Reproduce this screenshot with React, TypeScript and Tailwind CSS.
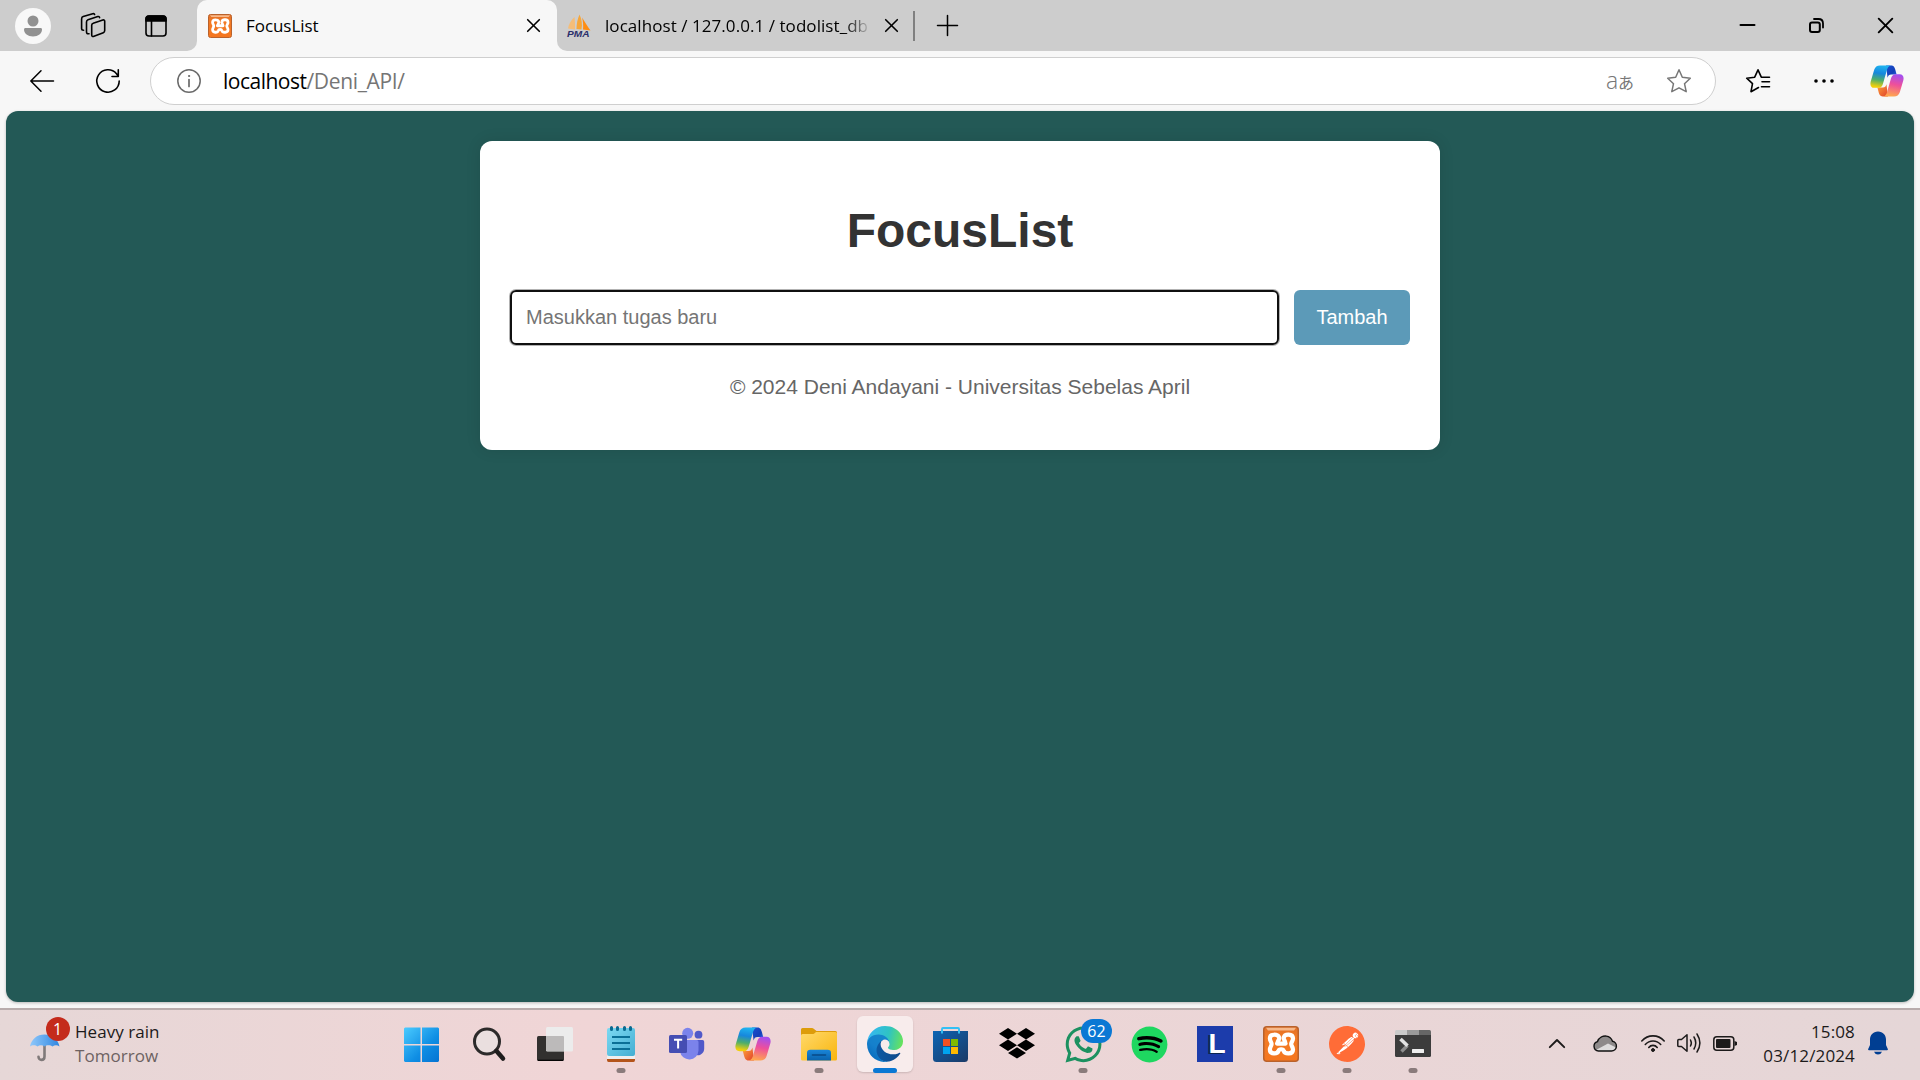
import React from "react";
import { FaWhatsapp, FaSpotify } from "react-icons/fa";
import { SiPostman } from "react-icons/si";

const ui = "font-['Open_Sans','Noto_Sans',sans-serif]";

type IconProps = {
  box: string;
  className: string;
  children: React.ReactNode;
  width?: number;
};

function Line({ box, className, children, width = 1.5 }: IconProps) {
  return (
    <svg
      viewBox={box}
      className={`shrink-0 overflow-visible ${className}`}
      fill="none"
      stroke="currentColor"
      strokeWidth={width}
      strokeLinecap="round"
      strokeLinejoin="round"
    >
      {children}
    </svg>
  );
}

function Xampp({ className }: { className: string }) {
  return (
    <svg viewBox="0 0 36 36" className={`shrink-0 ${className}`}>
      <defs>
        <linearGradient id="xa" x1="0" y1="0" x2="0" y2="1">
          <stop offset="0" stopColor="#e0702a" />
          <stop offset="0.3" stopColor="#f27a24" />
          <stop offset="1" stopColor="#f5761f" />
        </linearGradient>
      </defs>
      <rect x="0.75" y="0.75" width="34.5" height="34.5" rx="3" fill="url(#xa)" stroke="#b9622c" strokeWidth="1.5" />
      <path d="M3 1.8H33L31 4.4H5Z" fill="#f7b98a" />
      <path
        d="M16 11.2C14.5 8 7 7.4 6.9 12.4C6.8 15 8.6 16 8.6 18C8.6 20 6.8 21 6.9 23.6C7 28.6 14.5 28.4 15.6 24.6C16 22.8 20.2 22.8 20.6 24.6C21.7 28.4 29.9 28.6 30 23.6C30.1 21 28.2 20 28.2 18C28.2 16 30.1 15 30 12.4C29.9 7.4 21.7 7.6 20.8 11.4C20.2 13.6 22.2 14.6 22.2 16.6M16 11.2C17 13.6 14.6 14.6 14.6 16.6M14 17.6H22.6"
        fill="none"
        stroke="#fff"
        strokeWidth="4.2"
        strokeLinecap="round"
        strokeLinejoin="round"
      />
    </svg>
  );
}

function Copilot({ className, id }: { className: string; id: string }) {
  return (
    <svg viewBox="0 0 36 34" className={`shrink-0 ${className}`}>
      <defs>
        <linearGradient id={`${id}a`} x1="0.5" y1="0" x2="0.35" y2="1">
          <stop offset="0" stopColor="#1fb4f0" />
          <stop offset="0.35" stopColor="#1787dc" />
          <stop offset="0.65" stopColor="#4fae6a" />
          <stop offset="0.95" stopColor="#f0cf0c" />
        </linearGradient>
        <linearGradient id={`${id}b`} x1="0.6" y1="0" x2="0.4" y2="1">
          <stop offset="0" stopColor="#a34ff0" />
          <stop offset="0.45" stopColor="#ee4f9b" />
          <stop offset="1" stopColor="#ffa94d" />
        </linearGradient>
        <linearGradient id={`${id}c`} x1="0" y1="0" x2="1" y2="1">
          <stop offset="0" stopColor="#1a4fd0" />
          <stop offset="0.6" stopColor="#1440b8" />
          <stop offset="1" stopColor="#2f6be8" />
        </linearGradient>
        <linearGradient id={`${id}d`} x1="0" y1="0" x2="1" y2="1">
          <stop offset="0" stopColor="#ffa43a" />
          <stop offset="1" stopColor="#e0402c" />
        </linearGradient>
      </defs>
      <path d="M17 0.5H22.5C25.5 0.5 26.3 3 27 5.5L28.2 10H22.5C20 10 19.4 11 18.6 13.5Z" fill={`url(#${id}c)`} />
      <path d="M19 33.5H13.5C10.5 33.5 9.7 31 9 28.5L7.8 24H13.5C16 24 16.6 23 17.4 20.5Z" fill={`url(#${id}d)`} />
      <path d="M10.5 0.5H22C19.5 1 18.500 3.2 17.600 6.5L13.800 19.6C12.900 22.6 11.500 24.3 9 24.3H4.5C1 24.3-0.3 21.3 0.7 17.5L4.4 5C5.4 2 7.4 0.5 10.5 0.5Z" fill={`url(#${id}a)`} />
      <path d="M25.5 33.5H14C16.500 33 17.500 30.8 18.400 27.5L22.2 14.4C23.1 11.4 24.500 9.7 27 9.7H31.5C35 9.7 36.3 12.7 35.3 16.5L31.6 29C30.6 32 28.6 33.5 25.5 33.5Z" fill={`url(#${id}b)`} />
    </svg>
  );
}

const cross = <path d="M0.7 0.7L12.3 12.3M12.3 0.7L0.7 12.3" />;

function TabStrip() {
  return (
    <div className="flex h-[51px] shrink-0">
      <div className="flex w-[197px] items-center rounded-br-[10px] bg-[#cdcdcd] pl-[15px]">
        <svg viewBox="0 0 36 36" className="size-9">
          <circle cx="18" cy="18" r="18" fill="#f8f8f8" />
          <circle cx="18" cy="13" r="5.5" fill="#919191" />
          <path d="M10.500 20H25.500C26.500 20 27 20.700 27 21.500C27 25.500 23.200 28.500 18 28.500S9 25.500 9 21.500C9 20.700 9.500 20 10.500 20Z" fill="#919191" />
        </svg>
        <Line box="81 13 24 25" className="ml-[30px] h-[25px] w-6" width={1.6}>
          <path d="M93.200 23.200L102.800 20C104 19.600 104.700 20.100 104.700 21.300V30.600C104.700 31.700 104.300 32.400 103.300 32.800L94 36.300C92.600 36.800 91.700 36.300 91.700 35V25.300C91.700 24.200 92.200 23.500 93.200 23.200Z" />
          <path d="M89 33.700C87.300 34 86.500 33.500 86.500 32V22C86.500 21 87 20.200 88 19.800L97.800 16.600C98.800 16.300 99.500 16.600 99.600 17.600" />
          <path d="M83.600 30.200C82.200 30.200 81.600 29.700 81.600 28.500V18.900C81.600 17.800 82 17 83.200 16.600L92.700 13.800C93.700 13.500 94.400 13.700 94.600 14.500" />
        </Line>
        <Line box="0 0 22 22" className="ml-10 size-[22px]" width={1.6}>
          <rect x="1" y="1" width="20" height="20" rx="3" />
          <path d="M1 6V4C1 2 2 1 4 1H18C20 1 21 2 21 4V6Z" fill="currentColor" />
          <path d="M6.500 6V21" />
        </Line>
      </div>
      <div className="w-[360px] bg-[#cdcdcd]">
        <div className="flex h-full items-center rounded-t-[10px] bg-[#f7f7f7] pl-[11px]">
          <Xampp className="size-6" />
          <span className={`ml-[14px] w-[281px] text-[17px] tracking-[-0.05px] text-black ${ui}`}>FocusList</span>
          <Line box="0 0 13 13" className="size-[13px]" width={1.6}>{cross}</Line>
        </div>
      </div>
      <div className="flex flex-1 items-center rounded-bl-[10px] bg-[#cdcdcd] pl-[10px]">
        <svg viewBox="0 0 24 24" className="h-6 w-[24px] shrink-0 overflow-visible">
          <path d="M12.500 0.500C10.500 5 9.500 10 9.500 15L14.500 15.500C15.500 10 14.700 5 12.500 0.500Z" fill="#f6a63a" />
          <path d="M7.500 3C4 6 1.500 10.500 1 14.500L8 15.500C8 11 8 7 7.500 3Z" fill="#f5bd78" />
          <path d="M15 3.500C16 7 16.500 11 16 15.500L23.500 16.500C21 13 18 8 15 3.500Z" fill="#ff8d12" />
          <text x="0" y="23" fontFamily="Liberation Sans" fontStyle="italic" fontWeight="700" fontSize="9" textLength="22.500" lengthAdjust="spacingAndGlyphs" fill="#2b2f6b">PMA</text>
        </svg>
        <span className={`ml-[14px] w-[264px] overflow-hidden bg-linear-to-r from-black from-89% to-[#bdbdbd] bg-clip-text text-[17px] tracking-[0.06px] whitespace-nowrap text-transparent ${ui}`}>
          localhost / 127.0.0.1 / todolist_db
        </span>
        <Line box="0 0 13 13" className="ml-4 size-[13px]" width={1.6}>{cross}</Line>
        <div className="ml-[15px] h-[30px] w-[1.500px] bg-[#808080]" />
        <Line box="0 0 21 21" className="ml-[22px] size-[21px]">
          <path d="M10.500 0.500V20.500M0.500 10.500H20.500" />
        </Line>
        <div className="flex flex-1 items-center justify-end gap-[54px] pr-[27px]">
          <Line box="0 0 15 15" className="size-[15px]" width={2}><path d="M0.500 7H14.500" /></Line>
          <Line box="0 0 15 15" className="size-[15px]" width={2}>
            <rect x="1" y="4.500" width="9.800" height="9.500" rx="2" />
            <path d="M5 1H9.500C12.500 1 14 2.500 14 5.500V9.500" strokeWidth="1.800" />
          </Line>
          <Line box="0 0 15 15" className="size-[15px]" width={1.9}><path d="M0.700 0.700L14.300 14.300M14.300 0.700L0.700 14.300" /></Line>
        </div>
      </div>
    </div>
  );
}

function Toolbar() {
  return (
    <div className="flex h-[60px] shrink-0 items-center pl-[30px]">
      <Line box="0 0 24 22" className="h-[22px] w-6"><path d="M23.500 11H0.800M11 0.800L0.800 11L11 21.200" /></Line>
      <Line box="0 0 24 24" className="ml-[42px] size-6" width={1.6}>
        <path d="M23.200 12A11.200 11.200 0 1 1 20.500 4.700L22.200 7M22.300 0.800V7.500H16" />
      </Line>
      <div className="ml-[30px] flex h-12 w-[1566px] items-center rounded-full border border-[#cfcfcf] bg-white pl-[26px]">
        <Line box="0 0 24 24" className="size-6 text-[#6a6a6a]">
          <circle cx="12" cy="12" r="11.200" />
          <path d="M12 10.500V17.500" strokeWidth="1.700" />
          <circle cx="12" cy="7" r="0.600" fill="currentColor" strokeWidth="1" />
        </Line>
        <div className={`ml-[22px] flex-1 pt-[2px] text-[21px] text-[#757575] ${ui}`}>
          <span className="tracking-[-0.500px] text-black">localhost</span>
          <span className="tracking-[-0.350px]">/Deni_API/</span>
        </div>
        <div className="mr-[33px] flex w-[28px] items-baseline text-[#777]">
          <span className="w-3 font-['Open_Sans',sans-serif] text-[23px] leading-6 font-light">a</span>
          <span className="font-['Noto_Sans_CJK_JP',sans-serif] text-[16px] leading-6">あ</span>
        </div>
        <Line box="0 0 24 24" className="mr-6 size-6 text-[#777]">
          <path d="M12 0.800L15.300 8.200L23.300 9.200L17.500 14.700L19.200 22.700L12 18.800L4.800 22.700L6.500 14.700L0.700 9.200L8.700 8.200Z" />
        </Line>
      </div>
      <Line box="0 0 24 24" className="ml-[30px] size-6" width={1.6}>
        <path d="M12.500 18.500L5 22.700L6.500 14.700L0.700 9.200L8.700 8.200L12 0.800L15.300 8.200H23.500M16 12.700H23.500M15.500 17.700H23.500" />
      </Line>
      <svg viewBox="0 0 20 4" className="ml-11 h-1 w-5">
        <circle cx="2" cy="2" r="1.800" /><circle cx="10" cy="2" r="1.800" /><circle cx="18" cy="2" r="1.800" />
      </svg>
      <Copilot className="ml-9 h-8 w-[34px]" id="tb" />
    </div>
  );
}

function Page() {
  return (
    <main className="mx-[6px] flex h-[891px] shrink-0 justify-center rounded-xl bg-[#235956] pt-[30px] font-['Liberation_Sans',Arial,sans-serif] shadow-[0_1px_3px_rgba(0,0,0,0.25)]">
      <section className="h-[309px] w-[960px] rounded-xl bg-white px-[30px] text-center shadow-[0_0_15px_rgba(0,0,0,0.1)]">
        <h1 className="mt-[63px] text-[48px] leading-[54px] font-bold text-[#333]">FocusList</h1>
        <div className="mt-[32px] flex h-[55px] gap-[15px]">
          <div className="flex flex-1 items-center rounded-md border-2 border-[#101010] pb-[2px] pl-[14px] text-[20px] text-[#757575] ring-1 ring-black/30">
            Masukkan tugas baru
          </div>
          <button className="w-[116px] rounded-md bg-[#5c9ab8] pb-[2px] text-[20px] text-white">Tambah</button>
        </div>
        <p className="mt-[30px] text-[21px] leading-6 text-[#666]">© 2024 Deni Andayani - Universitas Sebelas April</p>
      </section>
    </main>
  );
}

function App36({ children }: { children: React.ReactNode }) {
  return <svg viewBox="0 0 36 36" className="size-9 overflow-visible">{children}</svg>;
}

const apps: { name: string; running?: boolean; active?: boolean; icon: React.ReactNode }[] = [
  {
    name: "start",
    icon: (
      <App36>
        <defs>
          <linearGradient id="win" x1="1" y1="1" x2="36" y2="36" gradientUnits="userSpaceOnUse">
            <stop offset="0" stopColor="#4cccff" /><stop offset="0.6" stopColor="#0f8ee4" /><stop offset="1" stopColor="#0573d2" />
          </linearGradient>
        </defs>
        <path d="M2 1.500H17.500V18H1V2.500ZM19 1.500H35L36 2.500V18H19ZM1 19.500H17.500V36H2L1 35ZM19 19.500H36V35L35 36H19Z" fill="url(#win)" />
      </App36>
    ),
  },
  {
    name: "search",
    icon: (
      <App36>
        <circle cx="16" cy="15.500" r="12.500" fill="#eadfdf" stroke="#2c2a2a" strokeWidth="3" />
        <path d="M25.500 25L32 32.500" stroke="#1f1d1d" strokeWidth="4.500" strokeLinecap="round" />
      </App36>
    ),
  },
  {
    name: "task-view",
    icon: (
      <App36>
        <rect x="0" y="10" width="27" height="25" rx="1.500" fill="#32302f" />
        <path d="M1 34.300H26" stroke="#000" strokeWidth="1.200" />
        <rect x="9" y="1" width="27" height="24.500" rx="1.500" fill="#ececec" />
        <path d="M9 10H26Q27 10 27 11V25H10.500Q9 25 9 23.500Z" fill="#bcbaba" />
      </App36>
    ),
  },
  {
    name: "notepad",
    running: true,
    icon: (
      <App36>
        <defs><linearGradient id="np" x1="0" y1="0" x2="1" y2="1"><stop offset="0" stopColor="#7cd9f2" /><stop offset="1" stopColor="#45aed2" /></linearGradient></defs>
        <path d="M4 28H32V34Q32 36 30.500 36H5.500Q4 36 4 34Z" fill="#b4541a" />
        <rect x="4" y="28" width="28" height="5" fill="#f0eeee" />
        <rect x="4" y="2" width="28" height="28" rx="2" fill="url(#np)" />
        <path d="M8.500 1.500V3.500M14.500 1.500V3.500M21.500 1.500V3.500M27.500 1.500V3.500" stroke="#0a6a90" strokeWidth="3" strokeLinecap="round" />
        <path d="M9 11H27M9 17H27M9 23H27" stroke="#0a6f96" strokeWidth="2" />
      </App36>
    ),
  },
  {
    name: "teams",
    icon: (
      <App36>
        <circle cx="29.500" cy="8.700" r="3.900" fill="#5059c9" />
        <path d="M25 14H33.500Q35.200 14 35.200 15.700V22.500A6.500 6.500 0 0 1 25 28Z" fill="#5059c9" />
        <circle cx="18.700" cy="7.300" r="5.500" fill="#7b83eb" />
        <path d="M11 14H27.500Q29.500 14 29.500 16V24.500A9.300 9.300 0 0 1 11 25.500Z" fill="#7b83eb" />
        <rect x="0" y="9" width="18" height="18" rx="1.500" fill="#454eb3" />
        <path d="M5 13.700H13.200M9.100 13.700V22.500" stroke="#fff" strokeWidth="2" fill="none" />
      </App36>
    ),
  },
  { name: "copilot", icon: <Copilot className="h-[34px] w-9" id="dock" /> },
  {
    name: "explorer",
    running: true,
    icon: (
      <App36>
        <defs>
          <linearGradient id="fo" x1="0" y1="0" x2="1" y2="1"><stop offset="0" stopColor="#ffd96b" /><stop offset="1" stopColor="#f9b50c" /></linearGradient>
          <linearGradient id="fb" x1="0" y1="0" x2="0" y2="1"><stop offset="0" stopColor="#1a86d9" /><stop offset="1" stopColor="#0a63ad" /></linearGradient>
        </defs>
        <path d="M0 3.500Q0 2 1.500 2H11Q12 2 12.700 2.700L15.500 5H34.500Q36 5 36 6.500V12H0Z" fill="#dd9c0a" />
        <path d="M0 9.500Q0 8 1.500 8H11.500Q12.500 8 13.300 7.400L15 6H34.500Q36 6 36 7.500V33Q36 34.500 34.500 34.500H1.500Q0 34.500 0 33Z" fill="url(#fo)" />
        <path d="M6 34.500V27Q6 23.700 9.300 23.700H26.700Q30 23.700 30 27V34.500Z" fill="url(#fb)" />
        <path d="M11.500 29H24.500" stroke="#084a86" strokeWidth="1.600" strokeLinecap="round" />
      </App36>
    ),
  },
  {
    name: "edge",
    active: true,
    icon: (
      <svg viewBox="0 0 256 256" className="size-9">
        <defs>
          <linearGradient id="e1" x1="60" y1="178" x2="240" y2="178" gradientUnits="userSpaceOnUse"><stop offset="0" stopColor="#0c59a4" /><stop offset="1" stopColor="#114a8b" /></linearGradient>
          <linearGradient id="e2" x1="150" y1="90" x2="40" y2="220" gradientUnits="userSpaceOnUse"><stop offset="0" stopColor="#1587cc" /><stop offset="0.600" stopColor="#1580cc" /><stop offset="1" stopColor="#0a6fc0" /></linearGradient>
          <linearGradient id="e3" x1="20" y1="60" x2="250" y2="110" gradientUnits="userSpaceOnUse"><stop offset="0" stopColor="#35b8ee" /><stop offset="0.550" stopColor="#2fc3c3" /><stop offset="1" stopColor="#66e25e" /></linearGradient>
        </defs>
        <path d="M231.380 190.540c-3.400 1.780-6.900 3.360-10.470 4.730a101.500 101.500 0 0 1-35.790 6.460c-47.170 0-88.260-32.440-88.260-74.080a31.400 31.400 0 0 1 16.340-27.270c-42.670 1.800-53.630 46.260-53.630 72.310 0 73.650 67.880 81.120 82.500 81.120 7.890 0 19.780-2.300 26.920-4.550l1.300-.44a128.340 128.340 0 0 0 66.500-52.800 4 4 0 0 0-5.410-5.480z" fill="url(#e1)" />
        <path d="M105.730 241.420a79.200 79.200 0 0 1-22.740-21.340 80.720 80.720 0 0 1 29.520-120c3.120-1.470 8.440-4.130 15.520-4a32.370 32.370 0 0 1 25.690 13 31.900 31.900 0 0 1 6.310 18.660c0-.21 24.460-79.600-80-79.600-43.900 0-80 41.660-80 78.210a130.150 130.150 0 0 0 12.110 56 128 128 0 0 0 156.380 67.110 75.550 75.550 0 0 1-62.780-8z" fill="url(#e2)" />
        <path d="M152.330 148.860c-.81 1.050-3.300 2.500-3.300 5.660 0 2.610 1.700 5.120 4.720 7.230 14.380 10 41.490 8.680 41.560 8.680a59.560 59.560 0 0 0 30.270-8.350 61.380 61.380 0 0 0 30.430-52.880c.26-22.410-8-37.310-11.340-43.910C223.490 23.840 177.720 0 128 0A128 128 0 0 0 0 126.200c.48-36.540 36.800-66.050 80-66.050 3.500 0 23.460.34 42 10.070 16.340 8.580 24.900 18.940 30.850 29.210 6.180 10.670 7.280 24.150 7.280 29.520 0 5.370-2.740 13.330-7.800 19.910z" fill="url(#e3)" />
      </svg>
    ),
  },
  {
    name: "store",
    icon: (
      <App36>
        <defs><linearGradient id="st" x1="0" y1="0" x2="1" y2="1"><stop offset="0" stopColor="#0c64b4" /><stop offset="1" stopColor="#1b3a66" /></linearGradient></defs>
        <path d="M0 5H35V32.500Q35 36 31.500 36H3.500Q0 36 0 32.500Z" fill="url(#st)" />
        <path d="M9 7.500V3Q9 2 10 2H25Q26 2 26 3V7.500" fill="none" stroke="#33c0f5" strokeWidth="1.900" />
        <path d="M10 13H17V20H10Z" fill="#f25022" /><path d="M18 13H25V20H18Z" fill="#7fba00" />
        <path d="M10 21H17V28H10Z" fill="#00a4ef" /><path d="M18 21H25V28H18Z" fill="#ffb900" />
      </App36>
    ),
  },
  {
    name: "dropbox",
    icon: (
      <App36>
        <path d="M9 2L18 7.700L9 13.400L0 7.700ZM27 2L36 7.700L27 13.400L18 7.700ZM9 13.600L18 19.300L9 25L0 19.300ZM27 13.600L36 19.300L27 25L18 19.300ZM18 21.200L27 26.900L18 32.600L9 26.900Z" />
      </App36>
    ),
  },
  {
    name: "whatsapp",
    running: true,
    icon: (
      <>
        <FaWhatsapp className="size-[41px] shrink-0 text-[#1c9160]" />
        <span className={`absolute top-[3px] left-[26px] flex h-6 w-[31px] items-center justify-center rounded-full bg-[#0a78d4] text-[16px] text-white ${ui}`}>62</span>
      </>
    ),
  },
  {
    name: "spotify",
    icon: (
      <div className="flex size-9 items-center justify-center rounded-full bg-[radial-gradient(#000_60%,transparent_61%)]">
        <FaSpotify className="size-[37px] shrink-0 text-[#1ed760]" />
      </div>
    ),
  },
  {
    name: "l-app",
    icon: (
      <div className="flex size-9 items-center justify-center bg-[#1c3cab] pl-1 font-['Liberation_Sans',sans-serif] text-[28px] leading-none font-bold text-white [text-shadow:-2px_1px_0_#0b2550]">
        L
      </div>
    ),
  },
  { name: "xampp", running: true, icon: <Xampp className="size-9" /> },
  {
    name: "postman",
    running: true,
    icon: (
      <div className="flex size-9 items-center justify-center rounded-full bg-[radial-gradient(#fff_60%,transparent_61%)]">
        <SiPostman className="size-9 text-[#ff6c37]" />
      </div>
    ),
  },
  {
    name: "terminal",
    running: true,
    icon: (
      <App36>
        <path d="M0 9H36V29.500Q36 31 34.500 31H1.500Q0 31 0 29.500Z" fill="#3c3c3c" />
        <path d="M1.500 4H12V9H0V5.500Q0 4 1.500 4Z" fill="#cbcbcb" />
        <path d="M12 4H24V9H12Z" fill="#9a9a9a" />
        <path d="M24 4H34.500Q36 4 36 5.500V9H24Z" fill="#666" />
        <path d="M12.500 19.500L6.500 25.500" stroke="#8d8d8d" strokeWidth="3.400" />
        <path d="M5.500 13L12.500 19.800" stroke="#e2e2e2" strokeWidth="3.600" />
        <rect x="17" y="23" width="12" height="4" rx="0.500" fill="#eee" />
      </App36>
    ),
  },
];

function Taskbar() {
  return (
    <footer className={`flex h-[72px] shrink-0 border-t-2 border-[#b8acac] bg-linear-to-r from-[#e6d7d7] via-[#f0d5d6] via-30% to-[#e5d6d7] ${ui}`}>
      <div className="flex w-[388px] pl-[30px]">
        <div className="relative mt-[23px] h-[29px] w-[30px]">
          <svg viewBox="0 0 30 29" className="h-[29px] w-[30px]">
            <defs><linearGradient id="um" x1="0" y1="0" x2="1" y2="0"><stop offset="0" stopColor="#8fc8fb" /><stop offset="1" stopColor="#2f86e0" /></linearGradient></defs>
            <path d="M14.500 12V23.500C14.500 28 8.500 28 8.500 23.800" fill="none" stroke="#807a7a" strokeWidth="2.600" strokeLinecap="round" />
            <path d="M0 13.500C1.500 6 7 1.500 14.500 1.500S28 6 29.500 13.500C27.500 11.700 24.500 11.700 22.500 13.500C20.500 11.700 16.500 11.700 14.500 13.500C12.500 11.700 9.500 11.700 7.500 13.500C5.500 11.700 2 11.700 0 13.500Z" fill="url(#um)" />
          </svg>
          <span className="absolute -top-4 left-[15.500px] flex size-6 items-center justify-center rounded-full bg-[#c42b1c] text-[16px] text-white">1</span>
        </div>
        <div className="mt-[9.500px] ml-[15px] text-[17px] leading-6 tracking-[0.05px]">
          <div className="text-[#1c1a1a]">Heavy rain</div>
          <div className="text-[#6d6262]">Tomorrow</div>
        </div>
      </div>
      <div className="flex w-[1058px]">
        {apps.map((a) => (
          <div key={a.name} className="flex h-[70px] w-[66px] justify-center pt-[6px] first:w-[68px] first:pr-[2px]">
            <div className={a.active ? "relative flex size-14 items-center justify-center rounded-md bg-[#f8ecec] shadow-[0_1px_2px_rgba(0,0,0,0.15)]" : "relative flex size-14 items-center justify-center"}>
              {a.icon}
              {a.running && <span className="absolute bottom-[-1px] left-1/2 h-[5px] w-[9px] -translate-x-1/2 rounded-full bg-[#8a7b7b]" />}
              {a.active && <span className="absolute bottom-[-1px] left-1/2 h-[5px] w-6 -translate-x-1/2 rounded-full bg-[#0a78d4]" />}
            </div>
          </div>
        ))}
      </div>
      <div className="flex flex-1 items-center pb-1 pl-[103px] text-[#1c1a1a]">
        <Line box="0 0 16 9" className="h-[9px] w-4" width={1.9}><path d="M0.800 8.200L8 1L15.200 8.200" /></Line>
        <svg viewBox="0 0 24 17" className="ml-7 h-[17px] w-6 overflow-visible">
          <path d="M5.500 16A4.800 4.800 0 0 1 4.500 6.600C6 2.500 10 0.800 13.300 1.100C16.500 1.500 18.500 3.300 19.500 6.300A4.900 4.900 0 0 1 18.500 16Z" fill="#8e8a8a" />
          <path d="M3 15L15 8.500L23 12.500C22.500 15 21 16 18.500 16H5.500Z" fill="#dedcdc" />
          <path d="M5.500 16A4.800 4.800 0 0 1 4.500 6.600C6 2.500 10 0.800 13.300 1.100C16.500 1.500 18.500 3.300 19.500 6.300A4.900 4.900 0 0 1 18.500 16Z" fill="none" stroke="#111" strokeWidth="1.400" />
        </svg>
        <Line box="0 0 24 17" className="ml-6 h-[17px] w-6" width={1.6}>
          <path d="M0.800 6C7 -0.800 17 -0.800 23.200 6M4.300 9.500C8.500 4.800 15.500 4.800 19.700 9.500M7.800 12.500C10 9.700 14 9.700 16.200 12.500" />
          <circle cx="12" cy="15" r="1.500" fill="currentColor" strokeWidth="1" />
        </Line>
        <Line box="0 0 24 20" className="ml-3 h-5 w-6">
          <path d="M0.800 7.500Q0.800 6.500 1.800 6.500H4.500L10 1.800V18.200L4.500 13.500H1.800Q0.800 13.500 0.800 12.500ZM13.500 7Q15.200 10 13.500 13M17 4Q20.500 10 17 16M20 1Q25.800 10 20 19" />
        </Line>
        <svg viewBox="0 0 24 15" className="ml-3 h-[15px] w-6">
          <rect x="0.800" y="0.800" width="20" height="13.400" rx="3" fill="none" stroke="#1c1a1a" strokeWidth="1.500" />
          <rect x="3" y="3" width="14.500" height="9" rx="1" fill="#1c1a1a" />
          <path d="M21.500 5L24 6V9L21.500 10Z" fill="#1c1a1a" />
        </svg>
        <div className="mt-px ml-[18px] w-[100px] text-right text-[17px] leading-6 tracking-[0.15px]">
          <div>15:08</div>
          <div>03/12/2024</div>
        </div>
        <svg viewBox="0 0 20 24" className="ml-[13px] h-6 w-5" fill="#003e92">
          <path d="M10 0.500C5 0.500 2 4.200 2 8.500V14L0.200 18Q-0.200 19.300 1 19.300H19Q20.200 19.300 19.800 18L18 14V8.500C18 4.200 15 0.500 10 0.500ZM6 20.800H14Q13 23.500 10 23.500T6 20.800Z" />
        </svg>
      </div>
    </footer>
  );
}

export default function App() {
  return (
    <div className="flex h-[1080px] w-[1920px] flex-col overflow-hidden bg-[#f7f7f7] text-black">
      <TabStrip />
      <Toolbar />
      <Page />
      <div className="h-[6px] shrink-0" />
      <Taskbar />
    </div>
  );
}
